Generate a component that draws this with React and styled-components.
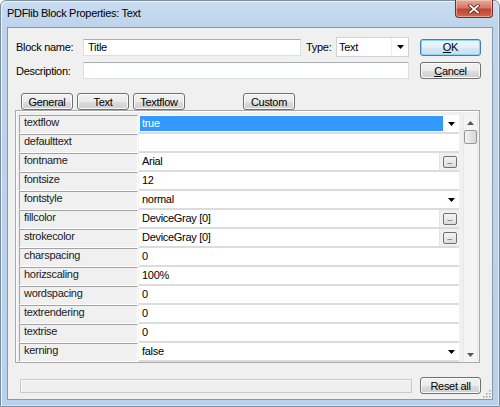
import React from "react";
import styled, { createGlobalStyle, css } from "styled-components";

const GlobalStyle = createGlobalStyle`
  html, body {
    margin: 0;
    padding: 0;
    background: #ffffff;
  }
  body {
    font-family: "Liberation Sans", Arial, sans-serif;
    font-size: 11px;
    letter-spacing: -0.3px;
    color: #000;
  }
  * {
    box-sizing: border-box;
  }
`;

const Window = styled.div`
  position: relative;
  width: 500px;
  height: 407px;
  display: flex;
  flex-direction: column;
  border: 1px solid #7d8ea3;
  border-radius: 6px 6px 0 0;
  background: linear-gradient(#cadcf0 0px, #bed4eb 26px, #b9d1ea 100%);
  box-shadow: inset 1px 1px 0 rgba(255, 255, 255, 0.65),
    inset -1px -1px 0 rgba(255, 255, 255, 0.45);
`;

const TitleBar = styled.div`
  height: 26px;
  flex: none;
  display: flex;
  align-items: flex-start;
  padding-left: 6px;
`;

const Title = styled.span`
  line-height: 25px;
  color: #000;
`;

const CloseButton = styled.div`
  margin: -1px 6px 0 auto;
  width: 38px;
  height: 18px;
  display: flex;
  align-items: center;
  justify-content: center;
  border: 1px solid #6e2f28;
  border-top: none;
  border-radius: 0 0 4px 4px;
  background: linear-gradient(#e8a99c 0%, #d47868 45%, #c2442f 55%, #cf6a50 100%);
  box-shadow: inset 0 0 0 1px rgba(255, 220, 210, 0.5);
`;

const Client = styled.div`
  position: relative;
  flex: 1;
  margin: 0 6px 6px;
  border: 1px solid #8497ae;
  background: #f0f0f0;
  display: flex;
  flex-direction: column;
`;

const FormGrid = styled.div`
  display: grid;
  grid-template-columns: 67px 326px 1fr;
  grid-template-rows: 20px 19px;
  row-gap: 4px;
  padding: 9px 11px 0 8px;
  align-items: center;
`;

const Label = styled.span`
  white-space: nowrap;
  color: #000;
`;

const FieldRow = styled.div`
  display: flex;
  align-items: center;
  height: 100%;
`;

const TextInput = styled.div`
  width: ${({ $width }) => ($width ? `${$width}px` : "100%")};
  height: 17px;
  background: #fff;
  border: 1px solid #dbdfe6;
  border-top-color: #abadb3;
  padding-left: 4px;
  line-height: 15px;
`;

const TypeLabel = styled.span`
  margin-left: 5px;
`;

const Select = styled.div`
  margin-left: auto;
  width: 73px;
  height: 20px;
  display: flex;
  background: #fff;
  border: 1px solid #d2d2d2;
`;

const SelectText = styled.span`
  flex: 1;
  padding-left: 2px;
  line-height: 18px;
  border-right: 1px solid #ededed;
`;

const SelectArrow = styled.span`
  width: 16px;
  display: flex;
  align-items: center;
  justify-content: center;
`;

const Button = styled.div`
  width: ${({ $width }) => $width || 61}px;
  height: 17px;
  justify-self: end;
  display: flex;
  align-items: center;
  justify-content: center;
  border: 1px solid #707070;
  border-radius: 3px;
  background: linear-gradient(#f2f2f2 0%, #ebebeb 50%, #dddddd 51%, #cfcfcf 100%);
  box-shadow: inset 0 0 0 1px #fbfbfb;
  color: #000;
  white-space: nowrap;

  ${({ $default }) =>
    $default &&
    css`
      border-color: #3c7fb1;
      background: linear-gradient(#eef6fc 0%, #e3eff8 50%, #d4e7f5 51%, #c7dff0 100%);
      box-shadow: inset 0 0 0 1px #8fd3f5;
    `}
`;

const TabRow = styled.div`
  display: flex;
  gap: 4px;
  margin-top: 13px;
  padding-left: 13px;
  height: 17px;
`;

const TabButton = styled(Button)`
  width: 52px;
  ${({ $spaced }) => $spaced && "margin-left: 54px;"}
`;

const Panel = styled.div`
  margin: 0 12px 0 7px;
  border: 1px solid #a9a9a9;
  box-shadow: inset 1px 1px 0 #ffffff;
  padding: 4px 1px 0 3px;
  display: flex;
  gap: 4px;
`;

const PropList = styled.div`
  width: 440px;
  display: flex;
  flex-direction: column;
`;

const PropRow = styled.div`
  height: 19px;
  display: grid;
  grid-template-columns: 119px 1fr;
`;

const NameCell = styled.div`
  background: #f0f0f0;
  border-top: 1px solid #a3a3a3;
  border-left: 1px solid #a3a3a3;
  border-right: 1px solid #ffffff;
  border-bottom: 1px solid #ffffff;
  padding: 0 0 0 4px;
  line-height: 13px;
  color: #1a1a1a;
`;

const ValueCell = styled.div`
  display: flex;
  background: #fff;
  border-bottom: 2px solid #dcdcdc;
  margin-left: 1px;
`;

const ValueText = styled.span`
  flex: 1;
  display: flex;
  align-items: center;
  padding-left: 3px;
  line-height: 15px;

  ${({ $selected }) =>
    $selected &&
    css`
      background: #3399ff;
      color: #fff;
      margin: 1px 0 1px 1px;
      padding-left: 2px;
    `}

  ${({ $field }) =>
    $field &&
    css`
      border-right: 1px solid #e4e4e4;
    `}
`;

const CellArrow = styled.span`
  width: 16px;
  display: flex;
  align-items: center;
  justify-content: center;
`;

const PickerArea = styled.span`
  width: 19px;
  display: flex;
  align-items: center;
  justify-content: center;
  background: #f0f0f0;
`;

const DotsButton = styled.span`
  width: 14px;
  height: 12px;
  border: 1px solid #707070;
  border-radius: 2px;
  background: linear-gradient(#f4f4f4, #dcdcdc);
  font-size: 8px;
  line-height: 10px;
  text-align: center;
  letter-spacing: -0.5px;
  overflow: hidden;
`;

const Scrollbar = styled.div`
  width: 15px;
  display: flex;
  flex-direction: column;
  background: #f4f4f4;
  border-left: 1px solid #e8e8e8;
  border-right: 1px solid #e8e8e8;
`;

const ScrollArrow = styled.div`
  height: 15px;
  display: flex;
  align-items: center;
  justify-content: center;
`;

const Thumb = styled.div`
  height: 14px;
  border: 1px solid #979797;
  border-radius: 2px;
  background: linear-gradient(90deg, #f3f3f3, #e4e4e4 50%, #d6d6d6);
`;

const ScrollTrack = styled.div`
  flex: 1;
`;

const StatusRow = styled.div`
  display: flex;
  align-items: center;
  gap: 8px;
  margin-top: 14px;
  padding: 0 11px 0 12px;
`;

const StatusBar = styled.div`
  flex: 1;
  height: 14px;
  border: 1px solid #c9c9c9;
  box-shadow: inset 1px 1px 0 #f8f8f8;
  background: #efefef;
`;

const Grip = styled.svg`
  position: absolute;
  right: 1px;
  bottom: 1px;
`;

const DownTriangle = ({ color = "#000" }) => (
  <svg width="7" height="4" viewBox="0 0 7 4">
    <polygon points="0,0 7,0 3.5,4" fill={color} />
  </svg>
);

const UpTriangle = ({ color = "#555" }) => (
  <svg width="7" height="4" viewBox="0 0 7 4">
    <polygon points="0,4 7,4 3.5,0" fill={color} />
  </svg>
);

const properties = [
  { name: "textflow", value: "true", kind: "select", selected: true },
  { name: "defaulttext", value: "" },
  { name: "fontname", value: "Arial", kind: "picker" },
  { name: "fontsize", value: "12" },
  { name: "fontstyle", value: "normal", kind: "select" },
  { name: "fillcolor", value: "DeviceGray [0]", kind: "picker" },
  { name: "strokecolor", value: "DeviceGray [0]", kind: "picker" },
  { name: "charspacing", value: "0" },
  { name: "horizscaling", value: "100%" },
  { name: "wordspacing", value: "0" },
  { name: "textrendering", value: "0" },
  { name: "textrise", value: "0" },
  { name: "kerning", value: "false", kind: "select" },
];

const PropertyRow = ({ name, value, kind, selected }) => (
  <PropRow>
    <NameCell>{name}</NameCell>
    <ValueCell>
      <ValueText $selected={selected} $field={kind === "picker"}>
        {value}
      </ValueText>
      {kind === "select" && (
        <CellArrow>
          <DownTriangle />
        </CellArrow>
      )}
      {kind === "picker" && (
        <PickerArea>
          <DotsButton>...</DotsButton>
        </PickerArea>
      )}
    </ValueCell>
  </PropRow>
);

export default function App() {
  return (
    <>
      <GlobalStyle />
      <Window>
        <TitleBar>
          <Title>PDFlib Block Properties: Text</Title>
          <CloseButton>
            <svg width="12" height="10" viewBox="0 0 12 10">
              <path d="M2 1.5 L10 8.5 M10 1.5 L2 8.5" stroke="#5a1d17" strokeWidth="3.4" strokeLinecap="square" />
              <path d="M2 1.5 L10 8.5 M10 1.5 L2 8.5" stroke="#ffffff" strokeWidth="1.8" strokeLinecap="square" />
            </svg>
          </CloseButton>
        </TitleBar>

        <Client>
          <FormGrid>
            <Label>Block name:</Label>
            <FieldRow>
              <TextInput $width={218}>Title</TextInput>
              <TypeLabel>Type:</TypeLabel>
              <Select>
                <SelectText>Text</SelectText>
                <SelectArrow>
                  <DownTriangle />
                </SelectArrow>
              </Select>
            </FieldRow>
            <Button $default>
              <u>O</u>K
            </Button>

            <Label>Description:</Label>
            <TextInput />
            <Button>
              <u>C</u>ancel
            </Button>
          </FormGrid>

          <TabRow>
            <TabButton>General</TabButton>
            <TabButton>Text</TabButton>
            <TabButton>Textflow</TabButton>
            <TabButton $spaced>Custom</TabButton>
          </TabRow>

          <Panel>
            <PropList>
              {properties.map((p) => (
                <PropertyRow key={p.name} {...p} />
              ))}
            </PropList>
            <Scrollbar>
              <ScrollArrow>
                <UpTriangle />
              </ScrollArrow>
              <Thumb />
              <ScrollTrack />
              <ScrollArrow>
                <DownTriangle color="#555" />
              </ScrollArrow>
            </Scrollbar>
          </Panel>

          <StatusRow>
            <StatusBar />
            <Button>Reset all</Button>
          </StatusRow>

          <Grip width="10" height="10" viewBox="0 0 10 10">
            {[
              [8, 2],
              [8, 5],
              [5, 5],
              [8, 8],
              [5, 8],
              [2, 8],
            ].map(([x, y]) => (
              <rect key={`${x}-${y}`} x={x} y={y} width="1.5" height="1.5" fill="#a0a0a0" />
            ))}
          </Grip>
        </Client>
      </Window>
    </>
  );
}
